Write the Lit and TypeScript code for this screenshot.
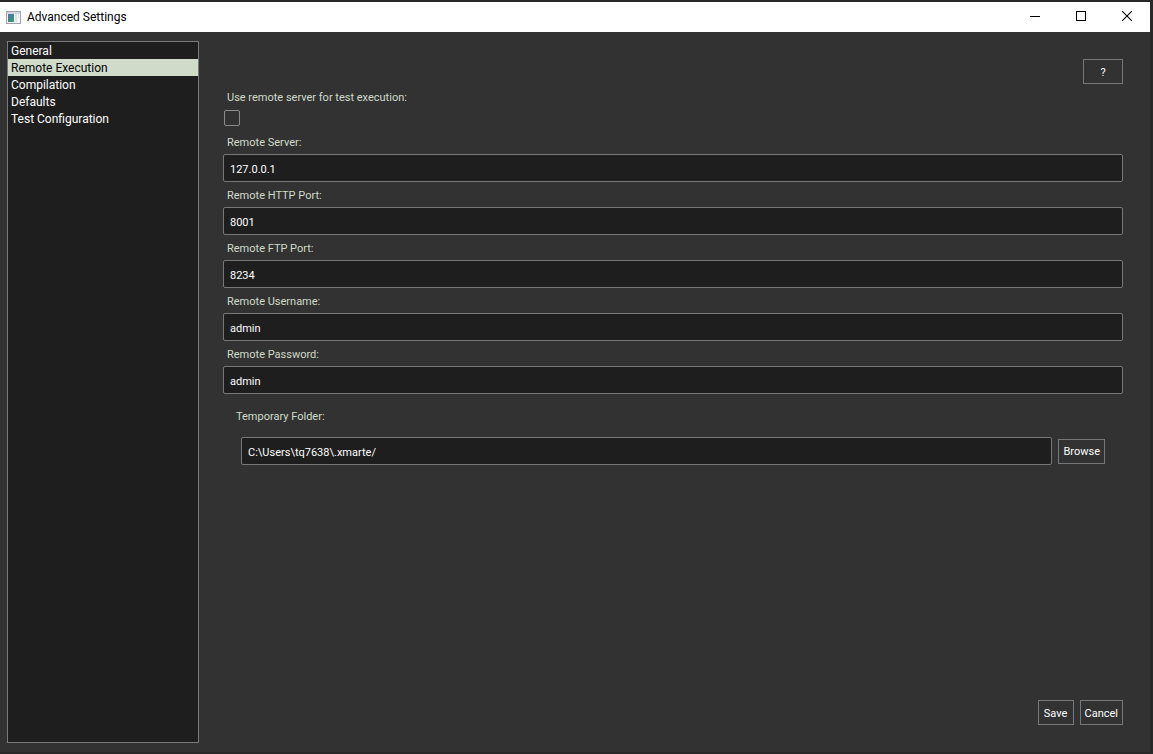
import { LitElement, html, css } from "lit";
import { customElement, state } from "lit/decorators.js";

interface Field {
  id: string;
  label: string;
  value: string;
}

const PAGES = ["General", "Remote Execution", "Compilation", "Defaults", "Test Configuration"];

const FIELDS: Field[] = [
  { id: "server", label: "Remote Server:", value: "127.0.0.1" },
  { id: "http-port", label: "Remote HTTP Port:", value: "8001" },
  { id: "ftp-port", label: "Remote FTP Port:", value: "8234" },
  { id: "username", label: "Remote Username:", value: "admin" },
  { id: "password", label: "Remote Password:", value: "admin" },
];

@customElement("app-root")
export class AppRoot extends LitElement {
  @state() private page = "Remote Execution";

  static styles = css`
    :host {
      display: flex;
      flex-direction: column;
      box-sizing: border-box;
      height: 100vh;
      padding: 2px 3px 2px 0;
      background: #292929;
      color: #fff;
      font: 11px/16px Roboto, "Noto Sans", sans-serif;
    }
    * {
      box-sizing: border-box;
    }
    button,
    input {
      font: inherit;
      color: inherit;
      margin: 0;
    }
    .titlebar {
      display: flex;
      align-items: center;
      height: 30px;
      flex: none;
      padding-left: 6px;
      background: #fff;
      color: #000;
    }
    .title {
      flex: 1;
      margin: 0 0 0 6px;
      font: 12px/16px Roboto, "Noto Sans", sans-serif;
    }
    .caption {
      display: grid;
      place-items: center;
      width: 46px;
      height: 30px;
      padding: 0 0 2px;
      border: 0;
      background: none;
    }
    svg {
      display: block;
    }
    .body {
      flex: 1;
      min-height: 0;
      display: flex;
      gap: 24px;
      padding: 9px 27px 9px 7px;
      background: #323232;
    }
    .pages {
      width: 192px;
      flex: none;
      border: 1px solid #7a7a7a;
      background: #1e1e1e;
    }
    .page {
      display: block;
      width: 100%;
      height: 17px;
      padding: 2px 3px 0;
      border: 0;
      background: none;
      text-align: left;
      font: 12px/15px Roboto, "Noto Sans", sans-serif;
      white-space: nowrap;
    }
    .page.selected {
      background: #d0dbca;
      color: #000;
    }
    .content {
      flex: 1;
      min-width: 0;
      display: flex;
      flex-direction: column;
      padding: 18px 0;
    }
    .button {
      flex: none;
      min-width: 36px;
      height: 25px;
      padding: 2px 4px 0;
      border: 1px solid #76797c;
      background: #323232;
      white-space: nowrap;
    }
    .help {
      align-self: flex-end;
      width: 40px;
    }
    .label {
      padding: 2px 0 0 4px;
      color: #d0dbca;
      line-height: 23px;
    }
    .check {
      appearance: none;
      width: 16px;
      height: 16px;
      margin: 1px 0 3px 1px;
      border: 1px solid #8c8c8c;
      border-radius: 2px;
      background: #323232;
    }
    .input {
      width: 100%;
      min-width: 0;
      height: 28px;
      padding: 3px 6px 0;
      border: 1px solid #76797c;
      border-radius: 2px;
      background: #1e1e1e;
    }
    .folder {
      display: flex;
      flex-direction: column;
      gap: 9px;
      padding: 9px 18px 9px 9px;
    }
    .folder-row {
      display: flex;
      align-items: center;
      gap: 6px;
      padding-left: 9px;
    }
    .actions {
      display: flex;
      justify-content: flex-end;
      gap: 6px;
      margin-top: auto;
    }
  `;

  render() {
    return html`
      <header class="titlebar">
        <svg width="15" height="13" viewBox="0 0 15 13" aria-hidden="true">
          <defs>
            <linearGradient id="pane" x1="0" y1="0" x2="1" y2="1">
              <stop offset="0" stop-color="#4a78a8" />
              <stop offset="1" stop-color="#3f9a6c" />
            </linearGradient>
          </defs>
          <rect x=".5" y=".5" width="14" height="12" fill="#f4f5f7" stroke="#a0a4ac" />
          <rect x="1" y="1" width="13" height="2" fill="#d3d7df" />
          <rect x="2" y="3" width="6" height="8" fill="url(#pane)" />
          <rect x="9" y="3" width="2" height="8" fill="#dfe2e6" />
          <rect x="12" y="3" width="1" height="4" fill="#dfe2e6" />
        </svg>
        <h1 class="title">Advanced Settings</h1>
        <button class="caption" aria-label="Minimize">
          <svg width="10" height="10" viewBox="0 0 10 10"><path d="M0 5.5H10" stroke="#000" /></svg>
        </button>
        <button class="caption" aria-label="Maximize">
          <svg width="10" height="10" viewBox="0 0 10 10">
            <rect x=".5" y=".5" width="9" height="9" fill="none" stroke="#000" />
          </svg>
        </button>
        <button class="caption" aria-label="Close">
          <svg width="10" height="10" viewBox="0 0 10 10">
            <path d="M0 0L10 10M10 0L0 10" stroke="#000" stroke-width="1.1" />
          </svg>
        </button>
      </header>
      <main class="body">
        <nav class="pages" aria-label="Settings pages">
          ${PAGES.map(
            (name) => html`<button
              class="page ${name === this.page ? "selected" : ""}"
              @click=${() => (this.page = name)}
            >${name}</button>`
          )}
        </nav>
        <form class="content" @submit=${(e: Event) => e.preventDefault()}>
          <button type="button" class="button help">?</button>
          <label class="label" for="remote">Use remote server for test execution:</label>
          <input class="check" id="remote" type="checkbox" />
          ${FIELDS.map(
            (f) => html`
              <label class="label" for=${f.id}>${f.label}</label>
              <input class="input" id=${f.id} type="text" .value=${f.value} />
            `
          )}
          <div class="folder">
            <label class="label" for="folder">Temporary Folder:</label>
            <div class="folder-row">
              <input class="input" id="folder" type="text" .value=${"C:\\Users\\tq7638\\.xmarte/"} />
              <button type="button" class="button">Browse</button>
            </div>
          </div>
          <div class="actions">
            <button type="submit" class="button">Save</button>
            <button type="button" class="button">Cancel</button>
          </div>
        </form>
      </main>
    `;
  }
}
